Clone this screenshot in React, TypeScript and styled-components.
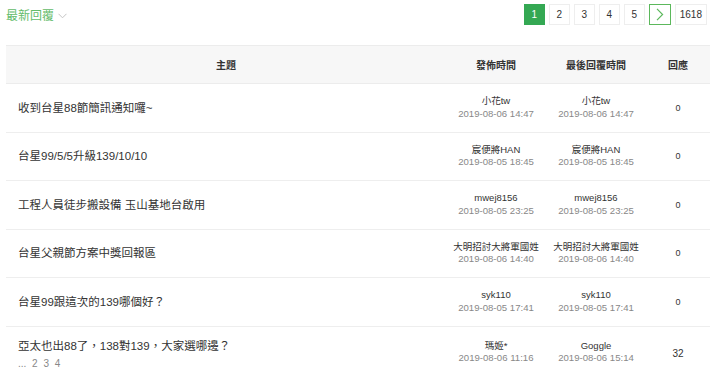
import React from "react";
import styled, { createGlobalStyle, css } from "styled-components";

const Global = createGlobalStyle`
  html, body { margin: 0; padding: 0; background: #fff; }
  body { font-family: "Liberation Sans", "Noto Sans CJK TC", Arial, sans-serif; color: #333; }
  * { box-sizing: border-box; }
`;

const Page = styled.div`
  width: 720px;
  padding: 4px 10px 0 6px;
`;

const TopBar = styled.div`
  display: flex;
  justify-content: space-between;
  align-items: center;
  height: 21px;
  margin-bottom: 20px;
`;

const SortLabel = styled.div`
  display: flex;
  align-items: center;
  gap: 4px;
  font-size: 12px;
  color: #63bb6a;
  margin-top: 2px;
  line-height: 14px;
`;

const Pager = styled.div`
  display: flex;
  gap: 4px;
  padding-right: 3px;
`;

const PageBtn = styled.div<{ $active?: boolean; $next?: boolean; $wide?: boolean }>`
  height: 21px;
  min-width: ${(p) => (p.$wide ? "31px" : "21px")};
  padding: 0 4px;
  display: flex;
  align-items: center;
  justify-content: center;
  font-size: 10px;
  color: #333;
  background: #fff;
  border: 1px solid #eee;
  ${(p) =>
    p.$active &&
    css`
      background: #34a853;
      border-color: #34a853;
      color: #fff;
    `}
  ${(p) =>
    p.$next &&
    css`
      border-color: #5cb85c;
      min-width: 22px;
    `}
`;

const Grid = styled.div`
  display: grid;
  grid-template-columns: 440px 100px 100px 64px;
  align-items: center;
`;

const HeaderRow = styled(Grid)`
  height: 39px;
  background: #f7f7f7;
  border-top: 1px solid #ececec;
  border-bottom: 1px solid #ececec;
  font-size: 10px;
  font-weight: 600;
  color: #333;
  text-align: center;
`;

const Row = styled(Grid)<{ $tall?: boolean }>`
  min-height: 48.5px;
  border-bottom: 1px solid #eee;
  ${(p) =>
    p.$tall &&
    css`
      align-items: start;
      padding-top: 12px;
      border-bottom: none;
    `}
`;

const TitleCell = styled.div`
  padding-left: 12px;
`;

const Title = styled.div`
  font-size: 11.5px;
  line-height: 14px;
  color: #333;
`;

const SubPages = styled.div`
  margin-top: 5px;
  font-size: 10px;
  line-height: 11px;
  color: #888;
  word-spacing: 3px;
`;

const InfoCell = styled.div<{ $tall?: boolean }>`
  text-align: center;
  line-height: 12.5px;
  ${(p) => p.$tall && css`padding-top: 1px;`}
`;

const Author = styled.div`
  font-size: 9.5px;
  color: #333;
`;

const Date = styled.div`
  font-size: 9.6px;
  color: #888;
`;

const Count = styled.div<{ $tall?: boolean }>`
  text-align: center;
  font-size: ${(p) => (p.$tall ? "10px" : "9px")};
  color: #333;
  ${(p) => p.$tall && css`padding-top: 9px;`}
`;

const Chevron = ({ color, dir }: { color: string; dir: "down" | "right" }) =>
  dir === "down" ? (
    <svg width="9" height="6" viewBox="0 0 9 6">
      <path d="M0.5 0.8 L4.5 4.8 L8.5 0.8" fill="none" stroke={color} strokeWidth="1" />
    </svg>
  ) : (
    <svg width="8" height="13" viewBox="0 0 8 13">
      <path d="M1 0.8 L6.6 6.5 L1 12.2" fill="none" stroke={color} strokeWidth="1.2" />
    </svg>
  );

type Topic = {
  title: string;
  author: string;
  posted: string;
  last: string;
  lastAt: string;
  replies: number;
  pages?: string;
};

const topics: Topic[] = [
  { title: "收到台星88節簡訊通知囉~", author: "小花tw", posted: "2019-08-06 14:47", last: "小花tw", lastAt: "2019-08-06 14:47", replies: 0 },
  { title: "台星99/5/5升級139/10/10", author: "宸便將HAN", posted: "2019-08-05 18:45", last: "宸便將HAN", lastAt: "2019-08-05 18:45", replies: 0 },
  { title: "工程人員徒步搬設備 玉山基地台啟用", author: "mwej8156", posted: "2019-08-05 23:25", last: "mwej8156", lastAt: "2019-08-05 23:25", replies: 0 },
  { title: "台星父親節方案中獎回報區", author: "大明招討大將軍國姓", posted: "2019-08-06 14:40", last: "大明招討大將軍國姓", lastAt: "2019-08-06 14:40", replies: 0 },
  { title: "台星99跟這次的139哪個好？", author: "syk110", posted: "2019-08-05 17:41", last: "syk110", lastAt: "2019-08-05 17:41", replies: 0 },
  { title: "亞太也出88了，138對139，大家選哪邊？", author: "瑪姬*", posted: "2019-08-06 11:16", last: "Goggle", lastAt: "2019-08-06 15:14", replies: 32, pages: "... 2 3 4" },
];

export default function App() {
  return (
    <Page>
      <Global />
      <TopBar>
        <SortLabel>
          最新回覆
          <Chevron color="#c4c4c4" dir="down" />
        </SortLabel>
        <Pager>
          <PageBtn $active>1</PageBtn>
          <PageBtn>2</PageBtn>
          <PageBtn>3</PageBtn>
          <PageBtn>4</PageBtn>
          <PageBtn>5</PageBtn>
          <PageBtn $next>
            <Chevron color="#5cb85c" dir="right" />
          </PageBtn>
          <PageBtn $wide>1618</PageBtn>
        </Pager>
      </TopBar>
      <HeaderRow>
        <div>主題</div>
        <div>發佈時間</div>
        <div>最後回覆時間</div>
        <div>回應</div>
      </HeaderRow>
      {topics.map((t) => {
        const tall = !!t.pages;
        return (
          <Row key={t.title} $tall={tall}>
            <TitleCell>
              <Title>{t.title}</Title>
              {t.pages && <SubPages>{t.pages}</SubPages>}
            </TitleCell>
            <InfoCell $tall={tall}>
              <Author>{t.author}</Author>
              <Date>{t.posted}</Date>
            </InfoCell>
            <InfoCell $tall={tall}>
              <Author>{t.last}</Author>
              <Date>{t.lastAt}</Date>
            </InfoCell>
            <Count $tall={tall}>{t.replies}</Count>
          </Row>
        );
      })}
    </Page>
  );
}
